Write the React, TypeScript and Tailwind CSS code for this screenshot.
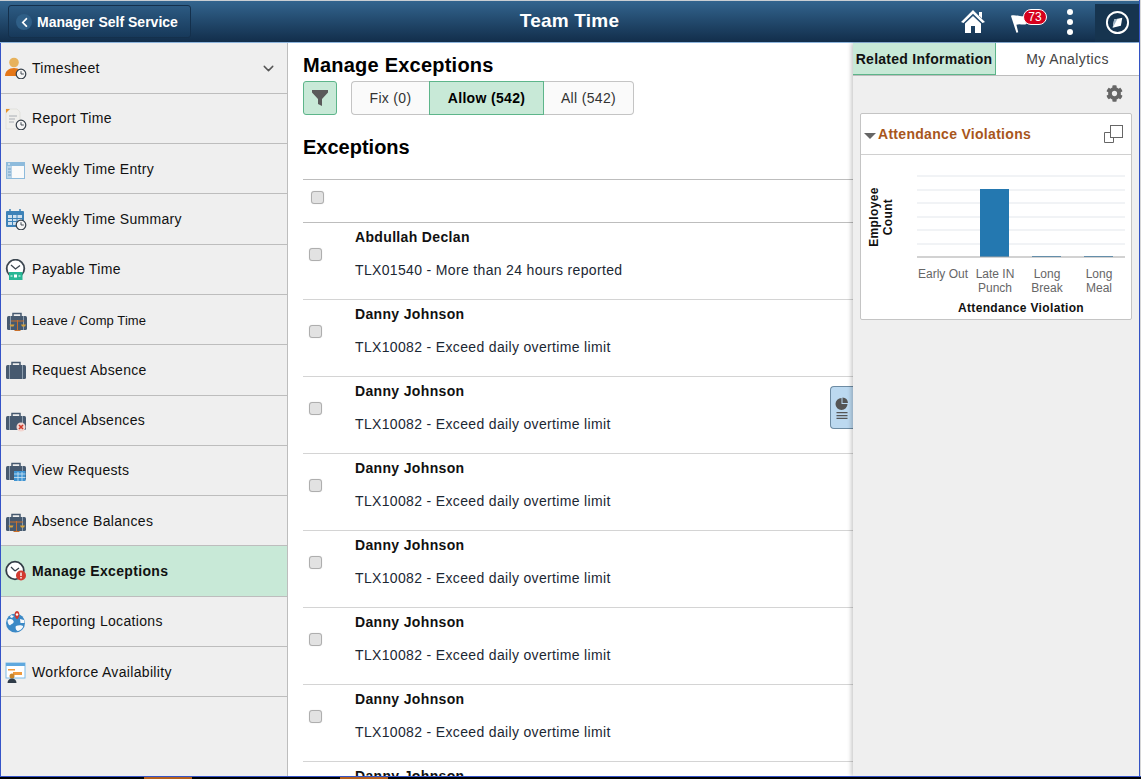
import React from "react";
import { FaCog, FaChevronLeft } from "react-icons/fa";
import { FiChevronDown } from "react-icons/fi";

const Clock = ({ x = 18, y = 18, r = 5 }: { x?: number; y?: number; r?: number }) => (
  <g>
    <circle cx={x} cy={y} r={r} fill="#f4f4f4" stroke="#333d47" strokeWidth="1.2" />
    <path d={`M${x} ${y - r + 2}V${y}H${x + r - 2}`} fill="none" stroke="#333d47" strokeWidth="0.9" />
  </g>
);

const Case = ({ fill = "#46596f" }: { fill?: string }) => (
  <g>
    <path d="M7 6V3.500h8V6" fill="none" stroke={fill} strokeWidth="1.500" />
    <rect x="1" y="6" width="20" height="14" rx="1.500" fill={fill} />
    <path d="M4.500 6v14M17.500 6v14" stroke="#9fb0bf" strokeWidth="0.8" />
  </g>
);

const Scale = () => (
  <g fill="none" stroke="#c8702c" strokeWidth="1">
    <path d="M5 11h13M11.500 10v10M8.500 20.500h6" />
    <path d="M3.500 14.500h5l-1 2h-3z" fill="#d8a23a" stroke="none" />
    <path d="M15 14.500h5l-1 2h-3z" fill="#d8a23a" stroke="none" />
  </g>
);

const icons: Record<string, React.ReactNode> = {
  timesheet: (
    <>
      <circle cx="9" cy="5.500" r="4.800" fill="#e7b25c" />
      <path d="M0 19c0-5 4-8 9-8s8 3 8 8z" fill="#e57717" />
      <Clock x={16} y={17} r={4.800} />
    </>
  ),
  report: (
    <>
      <path d="M1 1h11l3 3v17H1z" fill="#efefec" stroke="#d8d8d4" strokeWidth="0.6" />
      <path d="M1 1h4L1 5z" fill="#e8942b" />
      <path d="M4 8h8M4 11h6M4 14h5" stroke="#a9aeb4" strokeWidth="1" />
      <Clock x={16} y={17} r={4.800} />
    </>
  ),
  weekly: (
    <>
      <rect x="1" y="3" width="19" height="17" fill="#8ebbdc" />
      <rect x="2" y="7" width="17" height="12" fill="#fafafa" />
      <rect x="2" y="7" width="5" height="12" fill="#b8d3e8" />
      <path d="M3 10h3M3 13h3M3 16h3" stroke="#5f94bc" strokeWidth="0.8" />
      <path d="M3 5h2" stroke="#fff" strokeWidth="1" />
    </>
  ),
  summary: (
    <>
      <rect x="1" y="3" width="18" height="16" rx="1" fill="#3d82b8" />
      <path d="M5 1v4M15 1v4" stroke="#3d82b8" strokeWidth="1.500" />
      <rect x="3" y="7" width="14" height="10" fill="#cfe1ef" />
      <path d="M3 10.500h14M3 13.500h14M7.500 7v10M12 7v10" stroke="#3d82b8" strokeWidth="1" />
      <Clock x={16} y={17} r={4.800} />
    </>
  ),
  payable: (
    <>
      <circle cx="10.500" cy="9.500" r="8.800" fill="#fff" stroke="#3c4650" strokeWidth="1.800" />
      <path d="M6 6l4.500 4L15 6.500" fill="none" stroke="#3c4650" strokeWidth="1.300" />
      <rect x="4" y="13" width="13.500" height="8" fill="#27b795" />
      <rect x="9" y="15.500" width="3" height="3" fill="#fff" />
      <path d="M5.500 17h2M13.500 17h2" stroke="#fff" strokeWidth="1" />
    </>
  ),
  leave: (
    <g transform="translate(1 0)">
      <Case />
      <Scale />
    </g>
  ),
  request: <Case />,
  cancel: (
    <>
      <Case />
      <circle cx="16" cy="17" r="4.500" fill="#f2d5d0" />
      <path d="M14 15l4 4M18 15l-4 4" stroke="#cf3a2b" strokeWidth="1.600" />
    </>
  ),
  view: (
    <>
      <Case />
      <rect x="9" y="11" width="11.500" height="10" fill="#3f94d2" />
      <path d="M9 14h11.500M9 17.500h11.500M13 12v9M17 12v9" stroke="#cfe4f4" strokeWidth="0.800" />
    </>
  ),
  balances: (
    <>
      <Case />
      <Scale />
    </>
  ),
  exceptions: (
    <>
      <circle cx="10" cy="10.500" r="8.800" fill="#fff" stroke="#333d47" strokeWidth="1.800" />
      <path d="M10 11L6 7M10 11l4-3" fill="none" stroke="#333d47" strokeWidth="1.200" />
      <circle cx="16" cy="15.500" r="5" fill="#d23b30" />
      <path d="M16 12.500v3.500M16 17v1.500" stroke="#fff" strokeWidth="1.400" />
    </>
  ),
  locations: (
    <>
      <circle cx="10.500" cy="12" r="9.500" fill="#3b89c6" />
      <path d="M2.500 9c3-2 5-1 6 1s-2 3-3 4-3-1-3-5zM11 15c2-1 6-1 7 0s-3 5-5 5-3-4-2-5zM6 4l3 1-2 2-2-1zM15 8l4 1 .500 3-4 0z" fill="#f5f8fb" />
      <path d="M11.500 8C8.500 4.500 9.500 0 12 0s3.500 4.500.5 8z" fill="#cd3a30" />
      <circle cx="12" cy="3.500" r="1.200" fill="#fff" />
    </>
  ),
  workforce: (
    <>
      <rect x="1" y="1" width="19" height="15" fill="#fff" stroke="#7dbbe8" strokeWidth="1" />
      <rect x="1" y="1" width="19" height="3" fill="#5fa8de" />
      <path d="M3 7h7v1.500H3zM8 10h9v3H8z" fill="#ef9a3d" />
      <circle cx="7" cy="14" r="2.500" fill="#c8862d" />
      <path d="M2.500 21c0-3 2-4.500 4.500-4.500s4.500 1.500 4.500 4.500z" fill="#2f3b48" />
    </>
  ),
};

const navItems = [
  { key: "timesheet", label: "Timesheet", h: "h-[51px]", chevron: true },
  { key: "report", label: "Report Time", h: "h-[50px]" },
  { key: "weekly", label: "Weekly Time Entry", h: "h-[50px] pt-[2px]" },
  { key: "summary", label: "Weekly Time Summary", h: "h-[51px]" },
  { key: "payable", label: "Payable Time", h: "h-[50px]" },
  { key: "leave", label: "Leave / Comp Time", h: "h-[50px] pt-[2px]", small: true },
  { key: "request", label: "Request Absence", h: "h-[51px]" },
  { key: "cancel", label: "Cancel Absences", h: "h-[50px]" },
  { key: "view", label: "View Requests", h: "h-[50px]" },
  { key: "balances", label: "Absence Balances", h: "h-[50px] pt-[2px]" },
  { key: "exceptions", label: "Manage Exceptions", h: "h-[51px]", active: true },
  { key: "locations", label: "Reporting Locations", h: "h-[50px]" },
  { key: "workforce", label: "Workforce Availability", h: "h-[50px] pt-[2px]" },
];

const rows = [
  { name: "Abdullah Declan", msg: "TLX01540 - More than 24 hours reported" },
  ...Array.from({ length: 7 }, () => ({
    name: "Danny Johnson",
    msg: "TLX10082 - Exceed daily overtime limit",
  })),
];

const Checkbox = ({ className }: { className: string }) => (
  <input
    type="checkbox"
    aria-label="Select"
    className={`appearance-none w-[13px] h-[13px] shrink-0 rounded-[3px] bg-[#e2e2e2] border border-[#aeaeae] shadow-[0_0_1px_#ccc] ${className}`}
  />
);

const Header = () => (
  <header className="relative flex items-center h-[43px] shrink-0 border-t border-t-[#c9ced3] border-b border-b-[#8db4dc] bg-gradient-to-b from-[#33658f] to-[#122e4b] text-white">
    <button className="flex items-center ml-[8px] w-[183px] h-[33px] rounded-[3px] border border-[#14304c] bg-gradient-to-b from-[#2c5a82] to-[#17395a] pl-[7px] pt-[1px] font-bold text-[14px]">
      <span className="flex items-center justify-center w-[16px] h-[16px] rounded-full bg-[#2f5f87] mr-[5px]">
        <FaChevronLeft className="text-[11px] text-white" />
      </span>
      Manager Self Service
    </button>
    <h1 className="absolute left-0 right-0 text-center font-bold text-[19px] tracking-[0.2px]">Team Time</h1>
    <div className="ml-auto flex items-center h-full">
      <svg viewBox="0 0 24 23" className="w-[24px] h-[23px] mr-[25px]" fill="#fff">
        <path d="M12 0L24 12l-2.500 1L12 3.800 2.500 13 0 12z" />
        <path d="M4 13.500L12 6l8 7.500V23h-6v-7h-4v7H4z" />
        <path d="M18 2h3v6.500l-3-3z" />
      </svg>
      <div className="relative w-[37px] h-[26px] mr-[20px]">
        <svg viewBox="0 0 24 26" className="absolute left-0 top-[2px] w-[22px] h-[24px]" fill="#fff">
          <path d="M1 5c5-2 9 2 15 0l3 0-1 9c-4 2-7-1-11 1l2 8-2 .500L1 5z" />
        </svg>
        <span className="absolute left-[13px] top-0 h-[16px] w-[24px] text-center rounded-[8px] bg-[#d6001c] border border-white text-[12px] leading-[14px]">73</span>
      </div>
      <div className="flex flex-col gap-[4px] mr-[22px]">
        <span className="w-[6px] h-[6px] rounded-full bg-white" />
        <span className="w-[6px] h-[6px] rounded-full bg-white" />
        <span className="w-[6px] h-[6px] rounded-full bg-white" />
      </div>
      <div className="flex items-center justify-center w-[44px] h-[38px] mt-[3px] pb-[1px] bg-[#16344f]">
        <svg viewBox="0 0 26 26" className="w-[25px] h-[25px]">
          <circle cx="13" cy="13" r="11" fill="none" stroke="#fff" strokeWidth="2" />
          <path d="M18 8l-1.500 8.500L8 18.500 9.500 10z" fill="#fff" />
          <path d="M8 18.500L9.500 10 13 9z" fill="#9fb4c6" />
        </svg>
      </div>
    </div>
  </header>
);

const Sidebar = () => (
  <nav className="w-[288px] shrink-0 bg-[#efefef] border-r border-[#bdbdbd] border-l border-l-[#3554c8]">
    {navItems.map((item) => (
      <div
        key={item.key}
        className={`flex items-center pl-[4px] pr-[10px] border-b border-[#bdbdbd] text-[#111] ${item.h} ${
          item.active ? "bg-[#c8e9d7] font-bold" : ""
        } ${item.small ? "text-[13px] tracking-[0.08px]" : "text-[14px] tracking-[0.33px]"}`}
      >
        <svg viewBox="0 0 22 22" className="w-[22px] h-[22px] shrink-0 mr-[5px]">
          {icons[item.key]}
        </svg>
        <span>{item.label}</span>
        {item.chevron && <FiChevronDown className="ml-auto text-[#555] text-[17px]" />}
      </div>
    ))}
  </nav>
);

const Main = () => (
  <main className="relative flex-1 min-w-0 overflow-hidden pl-[15px]">
    <h2 className="text-[20px] font-bold leading-[23px] tracking-[0.23px] text-black mt-[11px]">Manage Exceptions</h2>
    <div className="flex mt-[4px] h-[34px]">
      <button className="flex items-center justify-center w-[34px] rounded-[3px] border border-[#5db58a] bg-[#c8e9d7]">
        <svg viewBox="0 0 16 16" className="w-[16px] h-[16px]" fill="#5a5a5a">
          <path d="M0 0h16v2.500L10 9v7l-4-2V9L0 2.500z" />
        </svg>
      </button>
      <div className="flex ml-[14px] text-[14px] tracking-[0.33px] text-[#333]">
        <button className="w-[78px] pt-[1px] rounded-l-[4px] border border-[#c4c4c4] border-r-0 bg-[#fafafa]">Fix (0)</button>
        <button className="w-[115px] pt-[1px] border border-[#5db58a] bg-[#c8e9d7] font-bold text-black">Allow (542)</button>
        <button className="w-[90px] pt-[1px] rounded-r-[4px] border border-[#c4c4c4] border-l-0 bg-[#fafafa]">All (542)</button>
      </div>
    </div>
    <h2 className="text-[20px] font-bold leading-[23px] text-black mt-[21px]">Exceptions</h2>
    <div className="mt-[20px] h-[44px] flex items-start border-t border-b border-[#bdbdbd]">
      <Checkbox className="mt-[11px] ml-[8px]" />
    </div>
    {rows.map((row, i) => (
      <div key={i} className="flex h-[77px] border-b border-[#d4d4d4]">
        <Checkbox className="mt-[25px] ml-[6px]" />
        <div className="ml-[33px] text-[14px] tracking-[0.34px]">
          <div className="font-bold text-[#111] mt-[6px] leading-[17px]">{row.name}</div>
          <div className="text-[#1b2733] mt-[16px] leading-[17px]">{row.msg}</div>
        </div>
      </div>
    ))}
    <div className="absolute right-0 top-[343px] flex flex-col items-center justify-center w-[23px] h-[43px] rounded-l-[4px] border border-r-0 border-[#6d8ba3] bg-[#bcd9f0]">
      <svg viewBox="0 0 14 22" className="w-[14px] h-[22px]" fill="#555">
        <path d="M6.500 1a6 6 0 1 0 6 6h-6z" />
        <path d="M7.500 0.500a6 6 0 0 1 5.500 5.500h-5.500z" />
        <path d="M1.500 15h11v1.300h-11zM1.500 18h11v1.300h-11zM1.500 20.700h11V22h-11z" />
      </svg>
    </div>
  </main>
);

const Chart = () => (
  <svg viewBox="0 0 270 165" className="block w-[270px] h-[165px]" fontFamily="'Liberation Sans', sans-serif">
    {[21, 35, 48, 62, 75, 89].map((y) => (
      <line key={y} x1="56" x2="264" y1={y} y2={y} stroke="#e3e7ec" />
    ))}
    <rect x="119" y="34" width="29" height="68" fill="#2478b0" />
    <rect x="171" y="101" width="29" height="1" fill="#2478b0" />
    <rect x="223" y="101" width="29" height="1" fill="#2478b0" />
    <line x1="56" x2="264" y1="102" y2="102" stroke="#a5a5a5" />
    <g fontSize="12" fill="#666" textAnchor="middle">
      <text x="82" y="123">Early Out</text>
      <text x="134" y="123">Late IN</text>
      <text x="134" y="137">Punch</text>
      <text x="186" y="123">Long</text>
      <text x="186" y="137">Break</text>
      <text x="238" y="123">Long</text>
      <text x="238" y="137">Meal</text>
    </g>
    <g fontSize="12" fontWeight="700" fill="#111" textAnchor="middle" letterSpacing="0.35">
      <text x="160" y="157">Attendance Violation</text>
      <text transform="translate(17 62) rotate(-90)">Employee</text>
      <text transform="translate(31 62) rotate(-90)">Count</text>
    </g>
  </svg>
);

const RelatedPanel = () => (
  <aside className="relative w-[286px] shrink-0 bg-[#efefef] shadow-[-2px_0_4px_rgba(0,0,0,0.2)]">
    <div className="flex h-[33px] border-b border-[#bdbdbd] text-[14px] tracking-[0.27px] bg-white">
      <div className="flex items-center justify-center w-[143px] pt-[2px] bg-[#c8e9d7] border-r border-b border-[#5db58a] font-bold text-[#111]">
        Related Information
      </div>
      <div className="flex items-center justify-center w-[143px] pt-[1px] tracking-[0.4px] text-[#444]">My Analytics</div>
    </div>
    <div className="flex justify-end pr-[16px] pt-[9px] h-[37px]">
      <FaCog className="text-[17px] text-[#666]" />
    </div>
    <section className="ml-[7px] w-[272px] h-[207px] rounded-[2px] border border-[#c4c4c4] bg-white">
      <div className="flex items-center h-[41px] border-b border-[#d0d0d0] pl-[3px] pr-[8px]">
        <span className="w-0 h-0 border-x-[6px] border-x-transparent border-t-[6px] border-t-[#666] mr-[2px] mt-[3px]" />
        <span className="text-[14px] pt-[1px] tracking-[0.3px] font-bold text-[#a8561c]">Attendance Violations</span>
        <svg viewBox="0 0 19 19" className="ml-auto w-[19px] h-[19px]" fill="none" stroke="#666">
          <rect x="6.500" y="0.500" width="12" height="12" />
          <path d="M6.500 7.500H0.500V17.500H9.500V12.500" />
        </svg>
      </div>
      <Chart />
    </section>
  </aside>
);

export default function App() {
  return (
    <div className="flex flex-col w-[1141px] h-[779px] overflow-hidden bg-white font-['Liberation_Sans',Arial,sans-serif]">
      <div className="flex flex-1 min-h-0">
        <div className="flex flex-col w-[1140px] border-r border-[#3554c8]">
          <Header />
          <div className="flex flex-1 min-h-0">
            <Sidebar />
            <Main />
            <RelatedPanel />
          </div>
        </div>
        <div className="flex-1 bg-[#d8d8d8]" />
      </div>
      <div className="relative h-[3px] shrink-0 bg-black border-t border-[#3554c8]">
        <span className="absolute left-[144px] top-0 w-[48px] h-[2px] bg-[#b5601c]" />
        <span className="absolute left-[340px] top-0 w-[48px] h-[2px] bg-[#b5601c]" />
      </div>
    </div>
  );
}
